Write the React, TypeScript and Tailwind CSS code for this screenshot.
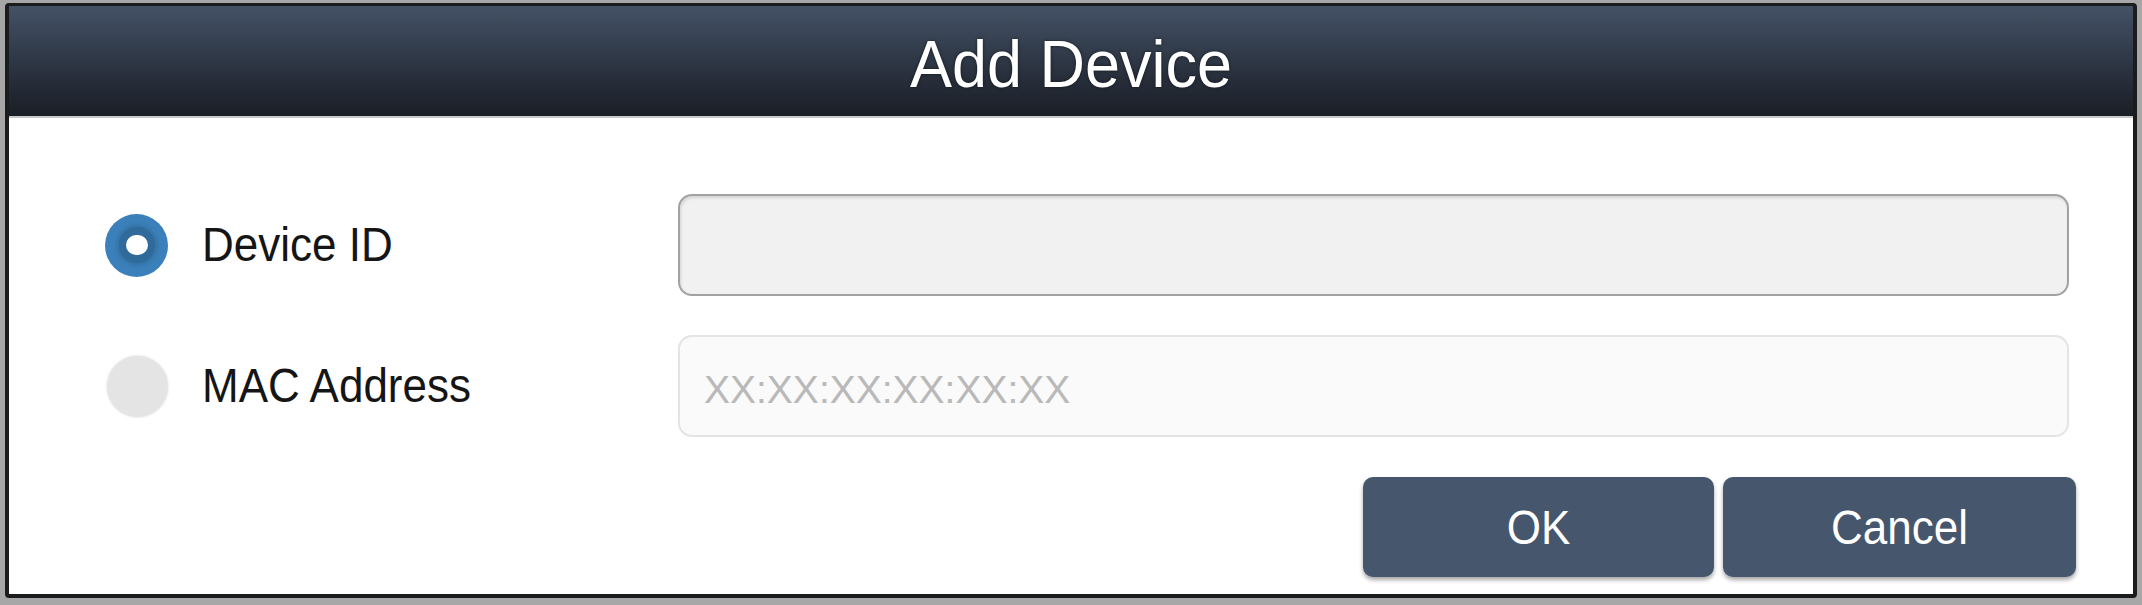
import React from 'react';

const font = { fontFamily: '"Liberation Sans", Arial, sans-serif' };

function Radio({ checked }: { checked: boolean }) {
  if (checked) {
    return (
      <div className="flex h-[63px] w-[63px] shrink-0 items-center justify-center rounded-full bg-[#3b80ba]">
        <div className="flex h-[36px] w-[36px] items-center justify-center rounded-full bg-[#2f6a9b] shadow-[0_0_4px_2px_#33709f]">
          <div className="h-[20px] w-[22px] rounded-full bg-white" />
        </div>
      </div>
    );
  }
  return <div className="ml-[2px] h-[61px] w-[61px] shrink-0 rounded-full bg-[#e4e4e4] shadow-[0_0_2px_1px_#ececec]" />;
}

export default function App() {
  return (
    <div className="h-[605px] w-[2142px] bg-[#a7a7a7] pb-[7px] pl-[5px] pr-[5px] pt-[3px]" style={font}>
      <div className="flex h-full flex-col overflow-hidden rounded-[4px] border-[4px] border-t-[3px] border-[#1b1c1e] bg-white">
        <div className="flex h-[112px] shrink-0 items-center justify-center border-b-[2px] border-[#c9c9c9] bg-gradient-to-b from-[#445266] via-[#2e3745] to-[#1a1e26] pt-[6px]">
          <h1 className="inline-block scale-y-[1.06] text-[63px] leading-none text-white [text-shadow:0_0_3px_rgba(0,0,0,0.6)]">
            Add Device
          </h1>
        </div>

        <div className="flex flex-1 flex-col pl-[96px] pr-[64px] pt-[76px]">
          <div className="flex items-center">
            <label className="flex w-[573px] shrink-0 items-center gap-[34px]">
              <Radio checked />
              <span className="inline-block scale-y-[1.08] text-[44px] leading-none text-[#151515]">Device ID</span>
            </label>
            <input
              className="h-[102px] flex-1 rounded-[14px] border-[2px] border-[#a2a2a2] bg-[#f1f1f1] px-[24px] text-[40px] shadow-[inset_1px_2px_3px_rgba(0,0,0,0.12)] outline-none"
              style={font}
            />
          </div>

          <div className="mt-[39px] flex items-center">
            <label className="flex w-[573px] shrink-0 items-center gap-[34px]">
              <Radio checked={false} />
              <span className="inline-block scale-y-[1.08] text-[44px] leading-none text-[#151515]">MAC Address</span>
            </label>
            <input
              placeholder="XX:XX:XX:XX:XX:XX"
              className="h-[102px] flex-1 rounded-[14px] border-[2px] border-[#e4e4e4] bg-[#fafafa] px-[24px] pt-[8px] text-[39px] outline-none placeholder:text-[#b9b9b9]"
              style={font}
            />
          </div>

          <div className="-mr-[7px] mt-[40px] flex justify-end gap-[9px]">
            <button className="h-[100px] w-[351px] rounded-[10px] bg-[#46566c] text-white shadow-[0_3px_4px_rgba(0,0,0,0.35)]">
              <span className="inline-block scale-y-[1.1] text-[44px]">OK</span>
            </button>
            <button className="h-[100px] w-[353px] rounded-[10px] bg-[#46566c] text-white shadow-[0_3px_4px_rgba(0,0,0,0.35)]">
              <span className="inline-block scale-y-[1.1] text-[44px]">Cancel</span>
            </button>
          </div>
        </div>
      </div>
    </div>
  );
}
